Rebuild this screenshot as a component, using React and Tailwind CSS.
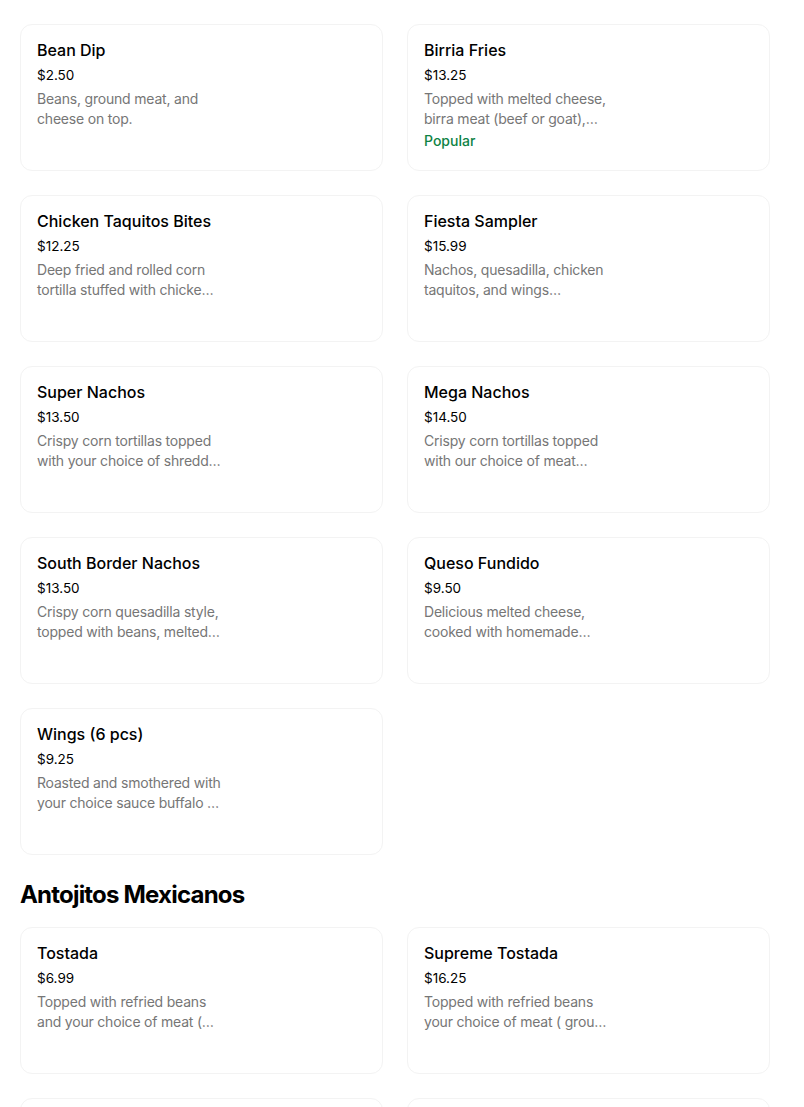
import React from "react";

const font = { fontFamily: "Inter, 'Liberation Sans', sans-serif" };

const group1 = [
  { t: "Bean Dip", p: "$2.50", d: ["Beans, ground meat, and", "cheese on top."] },
  { t: "Birria Fries", p: "$13.25", d: ["Topped with melted cheese,", "birra meat (beef or goat),…"], popular: true },
  { t: "Chicken Taquitos Bites", p: "$12.25", d: ["Deep fried and rolled corn", "tortilla stuffed with chicke…"] },
  { t: "Fiesta Sampler", p: "$15.99", d: ["Nachos, quesadilla, chicken", "taquitos, and wings…"] },
  { t: "Super Nachos", p: "$13.50", d: ["Crispy corn tortillas topped", "with your choice of shredd…"] },
  { t: "Mega Nachos", p: "$14.50", d: ["Crispy corn tortillas topped", "with our choice of meat…"] },
  { t: "South Border Nachos", p: "$13.50", d: ["Crispy corn quesadilla style,", "topped with beans, melted…"] },
  { t: "Queso Fundido", p: "$9.50", d: ["Delicious melted cheese,", "cooked with homemade…"] },
  { t: "Wings (6 pcs)", p: "$9.25", d: ["Roasted and smothered with", "your choice sauce buffalo …"] },
];

const group2 = [
  { t: "Tostada", p: "$6.99", d: ["Topped with refried beans", "and your choice of meat (…"] },
  { t: "Supreme Tostada", p: "$16.25", d: ["Topped with refried beans", "your choice of meat ( grou…"] },
  { t: "", p: "", d: [] },
  { t: "", p: "", d: [] },
];

function Card({ item }) {
  return (
    <div className="h-[147px] rounded-xl border border-[#f3f3f3] bg-white px-4 pt-[15px]">
      <div className="text-[16px] font-medium leading-5 text-black">{item.t}</div>
      <div className="mt-1 pt-px text-[13.5px] leading-5 text-black">{item.p}</div>
      <div className="mt-1 text-[14px] leading-5 tracking-[-0.2px] text-[#767676]">
        {item.d.map((l, i) => (
          <div key={i} className="whitespace-nowrap">{l}</div>
        ))}
      </div>
      {item.popular && (
        <div className="mt-0.5 text-[14px] font-medium leading-5 text-[#0e8345]">Popular</div>
      )}
    </div>
  );
}

export default function App() {
  return (
    <div className="min-h-screen bg-white" style={font}>
      <div className="w-[770px] pl-5 pt-6">
        <div className="grid grid-cols-2 gap-6">
          {group1.map((it, i) => (
            <Card key={i} item={it} />
          ))}
        </div>
        <h2 className="mt-6 text-[24px] font-bold leading-8 tracking-[-0.8px] text-black">
          Antojitos Mexicanos
        </h2>
        <div className="mt-4 grid grid-cols-2 gap-6">
          {group2.map((it, i) => (
            <Card key={i} item={it} />
          ))}
        </div>
      </div>
    </div>
  );
}
